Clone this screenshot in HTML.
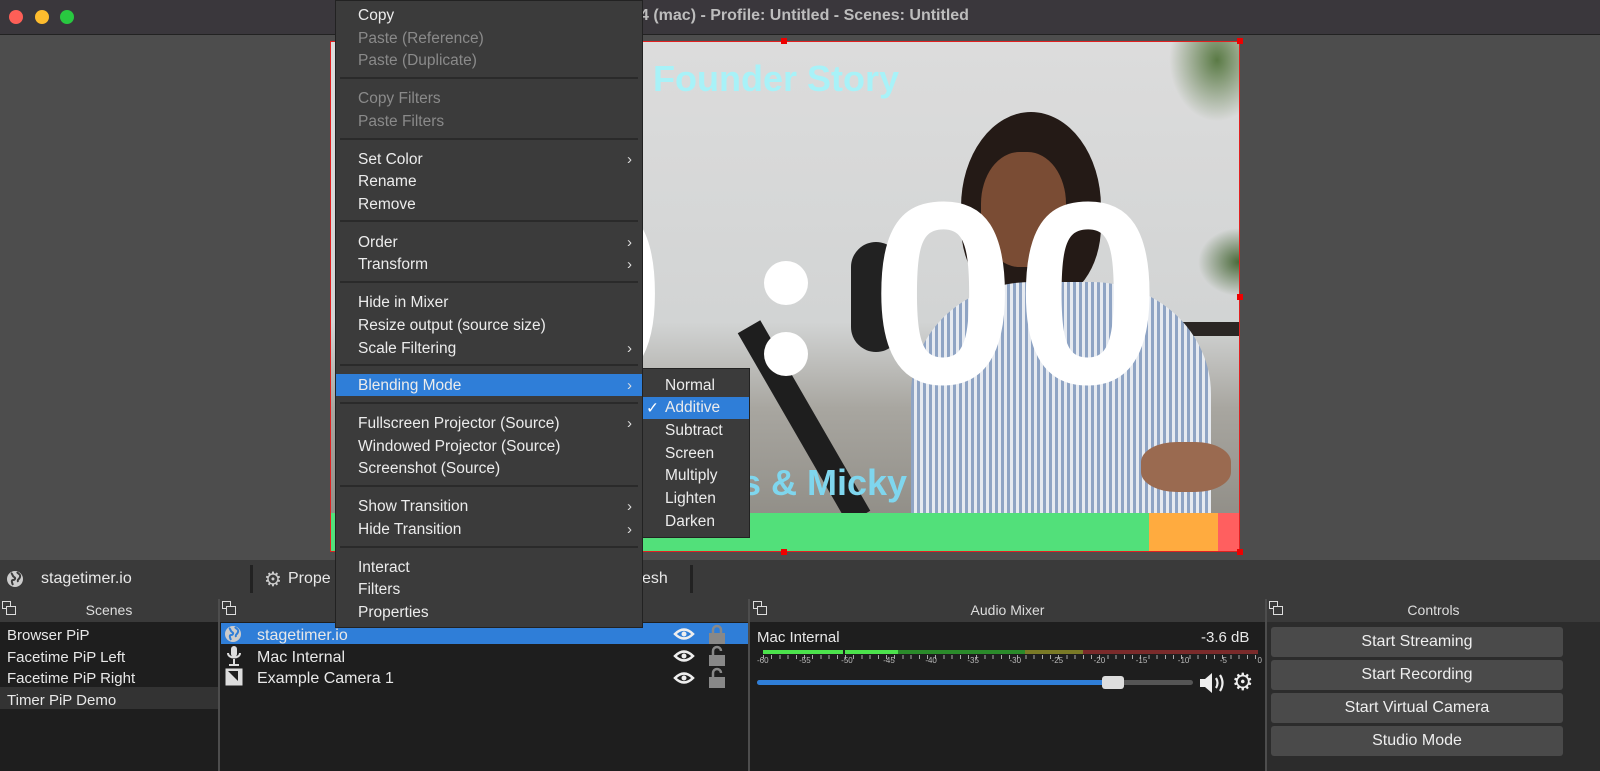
<!DOCTYPE html>
<html><head><meta charset="utf-8"><style>
*{box-sizing:border-box;margin:0;padding:0}
body{width:1600px;height:771px;overflow:hidden;background:#4d4d4d;font-family:"Liberation Sans",sans-serif;color:#e8e8e8;position:relative;font-size:15.5px}
.a{position:absolute}
.tl{width:14px;height:14px;border-radius:50%;top:10px}
.mi{position:absolute;left:22px;font-size:15.5px;color:#ececec;white-space:nowrap}
.dis{color:#8a8a8a}
.sep{position:absolute;left:4px;right:4px;height:2px;background:#2a2a2a}
.arr{position:absolute;right:10px;font-size:15px;color:#ddd}
.sub{position:absolute;left:22px;color:#ececec}
.hdr{background:#3a3a3a;height:23px;top:599px;font-size:14px;text-align:center;line-height:23px;color:#ddd}
.pane{background:#1e1e1e;top:622px;height:149px}
.btn{position:absolute;left:1271px;width:292px;height:30px;background:#4a4a4a;border-radius:3px;text-align:center;line-height:30px;font-size:16px;color:#eee}
</style></head><body>
<!-- title -->
<div class="a" style="left:0;top:0;width:1600px;height:35px;background:#3a373c;border-bottom:1px solid #222"></div>
<div class="a tl" style="left:9px;background:#fe5f57"></div>
<div class="a tl" style="left:35px;background:#febc2e"></div>
<div class="a tl" style="left:60px;background:#28c840"></div>
<div class="a" style="left:640px;top:7px;font-size:16px;font-weight:bold;color:#bdbdbd">4 (mac) - Profile: Untitled - Scenes: Untitled</div>

<!-- preview canvas -->
<div class="a" style="left:330px;top:41px;width:910px;height:511px;border:1px solid #e02020;overflow:hidden;background:linear-gradient(180deg,#dcdcdc 0%,#d2d4d4 55%,#a8a6a0 72%,#8a8780 100%)">
  <div class="a" style="left:830px;top:0;width:80px;height:90px;background:radial-gradient(ellipse at 70% 20%,#5a7a45 0%,rgba(100,130,80,0) 60%)"></div>
  <div class="a" style="left:860px;top:180px;width:60px;height:80px;background:radial-gradient(ellipse at 80% 50%,#4a6a3a 0%,rgba(80,110,60,0) 60%)"></div>
  <div class="a" style="left:830px;top:280px;width:80px;height:14px;background:#2b2624"></div>
  <!-- person -->
  <div class="a" style="left:630px;top:70px;width:140px;height:190px;border-radius:50% 50% 40% 40%;background:#241a16"></div>
  <div class="a" style="left:650px;top:110px;width:85px;height:115px;border-radius:45%;background:#7a4c34"></div>
  <div class="a" style="left:580px;top:240px;width:300px;height:280px;border-radius:40% 40% 0 0;background:repeating-linear-gradient(90deg,#8fa4c4 0 3px,#e6eaf0 3px 6px)"></div>
  <div class="a" style="left:810px;top:400px;width:90px;height:50px;border-radius:40%;background:#9a6a50"></div>
  <div class="a" style="left:460px;top:270px;width:26px;height:220px;background:#1e1e1e;transform:rotate(-30deg)"></div>
  <div class="a" style="left:520px;top:200px;width:50px;height:110px;border-radius:25px;background:#222"></div>
  <div class="a" style="left:322px;top:16px;font-size:36px;font-weight:bold;color:#a8f2f8">Founder Story</div>
  <div class="a" style="left:410px;top:420px;font-size:36px;font-weight:bold;color:#7fd6ee">s &amp; Micky</div>
  <div class="a" style="left:190px;top:122px;font-size:260px;font-weight:bold;color:#fff;line-height:260px">0</div>
  <div class="a" style="left:433px;top:219px;width:44px;height:44px;border-radius:50%;background:#fff"></div>
  <div class="a" style="left:433px;top:290px;width:44px;height:44px;border-radius:50%;background:#fff"></div>
  <div class="a" style="left:540px;top:122px;font-size:260px;font-weight:bold;color:#fff;line-height:260px">00</div>
  <div class="a" style="left:0;top:471px;width:818px;height:40px;background:#52e07a"></div>
  <div class="a" style="left:818px;top:471px;width:69px;height:40px;background:#ffab3f"></div>
  <div class="a" style="left:887px;top:471px;width:23px;height:40px;background:#ff5f5f"></div>
</div>
<div class="a" style="left:1237px;top:294px;width:6px;height:6px;background:#e00"></div>
<div class="a" style="left:1237px;top:549px;width:6px;height:6px;background:#e00"></div>
<div class="a" style="left:1237px;top:38px;width:6px;height:6px;background:#e00"></div>
<div class="a" style="left:781px;top:38px;width:6px;height:6px;background:#e00"></div>
<div class="a" style="left:781px;top:549px;width:6px;height:6px;background:#e00"></div>

<!-- toolbar -->
<div class="a" style="left:0;top:560px;width:1600px;height:39px;background:#3a3a3a"></div>
<svg class="a" style="left:6px;top:570px" width="18" height="18" viewBox="0 0 18 18"><circle cx="9" cy="9" r="8" fill="#ccc"/><path d="M5 3c2 1 1 3 3 4s1 3-1 3-1 3 0 5M11 2c1 2 4 2 3 5s-3 2-2 5" stroke="#3a3a3a" stroke-width="2" fill="none"/></svg>
<div class="a" style="left:41px;top:570px;font-size:16px">stagetimer.io</div>
<div class="a" style="left:250px;top:565px;width:3px;height:28px;background:#222"></div>
<div class="a" style="left:264px;top:567px;font-size:20px;color:#ccc">⚙</div>
<div class="a" style="left:288px;top:570px;font-size:16px">Prope</div>
<div class="a" style="left:642px;top:570px;font-size:16px">esh</div>
<div class="a" style="left:690px;top:565px;width:3px;height:28px;background:#222"></div>

<!-- docks headers -->
<div class="a hdr" style="left:0;width:218px">Scenes</div>
<div class="a hdr" style="left:220px;width:528px"></div>
<div class="a hdr" style="left:750px;width:515px">Audio Mixer</div>
<div class="a hdr" style="left:1267px;width:333px">Controls</div>
<svg class="a" style="left:2px;top:601px" width="14" height="14"><rect x="0.5" y="0.5" width="8" height="7" fill="none" stroke="#ddd"/><rect x="4.5" y="5.5" width="9" height="8" fill="#3a3a3a" stroke="#ddd"/></svg>
<svg class="a" style="left:222px;top:601px" width="14" height="14"><rect x="0.5" y="0.5" width="8" height="7" fill="none" stroke="#ddd"/><rect x="4.5" y="5.5" width="9" height="8" fill="#3a3a3a" stroke="#ddd"/></svg>
<svg class="a" style="left:753px;top:601px" width="14" height="14"><rect x="0.5" y="0.5" width="8" height="7" fill="none" stroke="#ddd"/><rect x="4.5" y="5.5" width="9" height="8" fill="#3a3a3a" stroke="#ddd"/></svg>
<svg class="a" style="left:1269px;top:601px" width="14" height="14"><rect x="0.5" y="0.5" width="8" height="7" fill="none" stroke="#ddd"/><rect x="4.5" y="5.5" width="9" height="8" fill="#3a3a3a" stroke="#ddd"/></svg>

<!-- panes -->
<div class="a pane" style="left:0;width:218px"></div>
<div class="a pane" style="left:220px;width:528px"></div>
<div class="a pane" style="left:750px;width:515px"></div>
<div class="a" style="left:1267px;top:622px;width:333px;height:149px;background:#2c2c2c"></div>

<div class="a" style="left:0;top:687px;width:218px;height:22px;background:#333"></div>
<div class="a" style="left:7px;top:625px;font-size:15px;line-height:21.7px">Browser PiP<br>Facetime PiP Left<br>Facetime PiP Right<br>Timer PiP Demo</div>

<div class="a" style="left:221px;top:623px;width:527px;height:21px;background:#2f7ed8"></div>
<svg class="a" style="left:224px;top:625px" width="18" height="18" viewBox="0 0 18 18"><circle cx="9" cy="9" r="8" fill="#ccc"/><path d="M5 3c2 1 1 3 3 4s1 3-1 3-1 3 0 5M11 2c1 2 4 2 3 5s-3 2-2 5" stroke="#2f7ed8" stroke-width="2" fill="none"/></svg>
<svg class="a" style="left:225px;top:645px" width="18" height="22" viewBox="0 0 18 22"><rect x="6" y="1" width="6" height="11" rx="3" fill="#ddd"/><path d="M3 8c0 6 12 6 12 0M9 14v5M4 20h10" stroke="#ddd" stroke-width="2" fill="none"/></svg>
<svg class="a" style="left:225px;top:668px" width="18" height="18" viewBox="0 0 18 18"><rect x="0.5" y="0.5" width="17" height="17" fill="#ddd"/><path d="M3 3l10 10V3z" fill="#1e1e1e"/></svg>
<div class="a" style="left:257px;top:625px;font-size:16px;line-height:21.7px">stagetimer.io<br>Mac Internal<br>Example Camera 1</div>
<svg class="a" style="left:673px;top:626px" width="22" height="60" viewBox="0 0 22 60"><g fill="none" stroke="#eee" stroke-width="2.5"><path d="M2 8Q11 -1 20 8Q11 17 2 8z"/><path d="M2 30Q11 21 20 30Q11 39 2 30z"/><path d="M2 52Q11 43 20 52Q11 61 2 52z"/></g><circle cx="11" cy="8" r="2.5" fill="#eee"/><circle cx="11" cy="30" r="2.5" fill="#eee"/><circle cx="11" cy="52" r="2.5" fill="#eee"/></svg>
<svg class="a" style="left:708px;top:624px" width="18" height="64" viewBox="0 0 18 64"><g fill="#888"><rect x="1" y="9" width="16" height="11"/><rect x="1" y="31" width="16" height="11"/><rect x="1" y="53" width="16" height="11"/></g><g fill="none" stroke="#888" stroke-width="2.5"><path d="M5 9V6a4 4 0 0 1 8 0v3"/><path d="M5 31v-4a4 4 0 0 1 8 0"/><path d="M5 53v-4a4 4 0 0 1 8 0"/></g></svg>

<!-- audio mixer -->
<div class="a" style="left:757px;top:629px;font-size:15px">Mac Internal</div>
<div class="a" style="left:1201px;top:629px;font-size:15px">-3.6 dB</div>
<div class="a" style="left:763px;top:650px;width:80px;height:4px;background:#4ce24c"></div>
<div class="a" style="left:845px;top:650px;width:53px;height:4px;background:#4ce24c"></div>
<div class="a" style="left:898px;top:650px;width:127px;height:4px;background:#2a8a2a"></div>
<div class="a" style="left:1025px;top:650px;width:58px;height:4px;background:#7a7a26"></div>
<div class="a" style="left:1083px;top:650px;width:175px;height:4px;background:#7a2a2a"></div>
<div class="a" style="left:763px;top:655px;width:495px;height:4px;background:repeating-linear-gradient(90deg,#aaa 0 1px,transparent 1px 8.2px)"></div>
<div class="a" style="left:757px;top:656px;width:505px;font-size:8px;color:#bbb;display:flex;justify-content:space-between">
<span>-60</span><span>-55</span><span>-50</span><span>-45</span><span>-40</span><span>-35</span><span>-30</span><span>-25</span><span>-20</span><span>-15</span><span>-10</span><span>-5</span><span>0</span></div>
<div class="a" style="left:757px;top:680px;width:436px;height:5px;border-radius:3px;background:#555"></div>
<div class="a" style="left:757px;top:680px;width:350px;height:5px;border-radius:3px;background:#2f7ed8"></div>
<div class="a" style="left:1102px;top:676px;width:22px;height:13px;border-radius:3px;background:#ddd"></div>
<svg class="a" style="left:1199px;top:671px" width="28" height="24" viewBox="0 0 28 24"><path d="M1 8h5l7-6v20l-7-6H1z" fill="#eee"/><path d="M17 7q3 5 0 10M21 4q5 8 0 16" stroke="#eee" stroke-width="2.2" fill="none"/></svg>
<div class="a" style="left:1232px;top:668px;font-size:24px;color:#eee">⚙</div>

<!-- controls -->
<div class="btn" style="top:627px">Start Streaming</div>
<div class="btn" style="top:660px">Start Recording</div>
<div class="btn" style="top:693px">Start Virtual Camera</div>
<div class="btn" style="top:726px">Studio Mode</div>

<!-- context menu -->
<div class="a" style="left:335px;top:0;width:308px;height:628px;background:#3b3b3b;border:1px solid #222;z-index:5">
  <div class="mi" style="top:6px">Copy</div>
  <div class="mi dis" style="top:29px">Paste (Reference)</div>
  <div class="mi dis" style="top:51px">Paste (Duplicate)</div>
  <div class="sep" style="top:76px"></div>
  <div class="mi dis" style="top:89px">Copy Filters</div>
  <div class="mi dis" style="top:112px">Paste Filters</div>
  <div class="sep" style="top:137px"></div>
  <div class="mi" style="top:150px">Set Color</div><div class="arr" style="top:150px">›</div>
  <div class="mi" style="top:172px">Rename</div>
  <div class="mi" style="top:195px">Remove</div>
  <div class="sep" style="top:219px"></div>
  <div class="mi" style="top:233px">Order</div><div class="arr" style="top:233px">›</div>
  <div class="mi" style="top:255px">Transform</div><div class="arr" style="top:255px">›</div>
  <div class="sep" style="top:280px"></div>
  <div class="mi" style="top:293px">Hide in Mixer</div>
  <div class="mi" style="top:316px">Resize output (source size)</div>
  <div class="mi" style="top:339px">Scale Filtering</div><div class="arr" style="top:339px">›</div>
  <div class="sep" style="top:363px"></div>
  <div class="a" style="left:0;top:373px;width:306px;height:22px;background:#2f7ed8"></div>
  <div class="mi" style="top:376px">Blending Mode</div><div class="arr" style="top:376px">›</div>
  <div class="sep" style="top:401px"></div>
  <div class="mi" style="top:414px">Fullscreen Projector (Source)</div><div class="arr" style="top:414px">›</div>
  <div class="mi" style="top:437px">Windowed Projector (Source)</div>
  <div class="mi" style="top:459px">Screenshot (Source)</div>
  <div class="sep" style="top:484px"></div>
  <div class="mi" style="top:497px">Show Transition</div><div class="arr" style="top:497px">›</div>
  <div class="mi" style="top:520px">Hide Transition</div><div class="arr" style="top:520px">›</div>
  <div class="sep" style="top:545px"></div>
  <div class="mi" style="top:558px">Interact</div>
  <div class="mi" style="top:580px">Filters</div>
  <div class="mi" style="top:603px">Properties</div>
</div>

<!-- submenu -->
<div class="a" style="left:642px;top:368px;width:108px;height:170px;background:#3b3b3b;border:1px solid #222;z-index:6">
  <div class="a" style="left:0;top:28px;width:106px;height:22px;background:#2f7ed8"></div>
  <div class="sub" style="top:8px">Normal</div>
  <div class="a" style="left:3px;top:30px;color:#fff">✓</div>
  <div class="sub" style="top:30px">Additive</div>
  <div class="sub" style="top:53px">Subtract</div>
  <div class="sub" style="top:76px">Screen</div>
  <div class="sub" style="top:98px">Multiply</div>
  <div class="sub" style="top:121px">Lighten</div>
  <div class="sub" style="top:144px">Darken</div>
</div>
</body></html>
